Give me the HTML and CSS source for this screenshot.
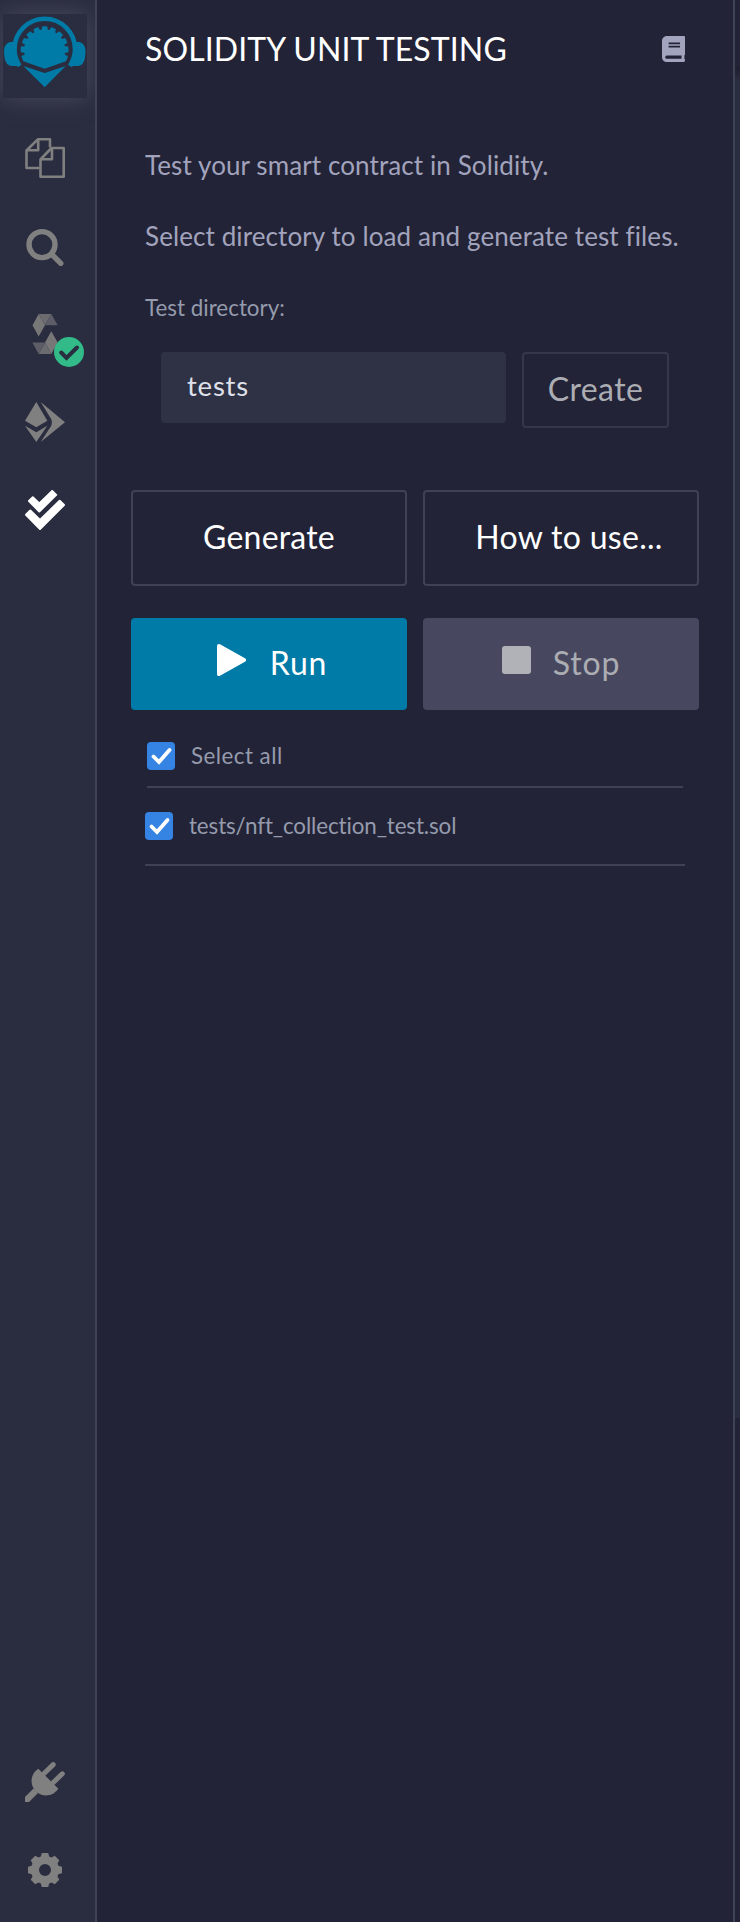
FILE: index.html
```
<!DOCTYPE html>
<html lang="en">
<head>
<meta charset="utf-8">
<title>Solidity Unit Testing</title>
<link rel="stylesheet" href="styles.css">
</head>
<body>
<div class="app">
  <nav class="rail">
    <div class="logo">
      <svg width="84" height="84" viewBox="0 0 84 84">
        <g fill="#007aa6">
          <path d="M11 28H7Q1 30 1 37Q1 52 9 52H17.500Q13 45 12.500 37L13 28ZM72.500 28H76.500Q82.500 30 82.500 37Q82.500 52 74.500 52H66Q70.500 45 71 37L70.500 28Z"/>
          <path d="M16.500 52Q11.300 43 11.500 35A30.200 30.200 0 0 1 72 35Q72.200 43 67 52" fill="none" stroke="#007aa6" stroke-width="4.600"/>
          <path d="M20.300 47.300A24 24 0 1 1 63 47.300L41.700 54.700Z"/>
          <path d="M20.300 52L41.700 59L62.700 52L41.700 73.300Z"/>
        </g>
        <g fill="#2a2c3f" transform="translate(41.700 36)">
          <path id="notch" d="M-2.400-25.500H2.400L.9-20.500H-.9Z" transform="rotate(-11)"/>
          <path d="M-2.400-25.500H2.400L.9-20.500H-.9Z" transform="rotate(11)"/>
          <path d="M-2.400-25.500H2.400L.9-20.500H-.9Z" transform="rotate(-33)"/>
          <path d="M-2.400-25.500H2.400L.9-20.500H-.9Z" transform="rotate(33)"/>
          <path d="M-2.400-25.500H2.400L.9-20.500H-.9Z" transform="rotate(-55)"/>
          <path d="M-2.400-25.500H2.400L.9-20.500H-.9Z" transform="rotate(55)"/>
          <path d="M-2.400-25.500H2.400L.9-20.500H-.9Z" transform="rotate(-77)"/>
          <path d="M-2.400-25.500H2.400L.9-20.500H-.9Z" transform="rotate(77)"/>
          <path d="M-2.400-25.500H2.400L.9-20.500H-.9Z" transform="rotate(-100)"/>
          <path d="M-2.400-25.500H2.400L.9-20.500H-.9Z" transform="rotate(100)"/>
        </g>
      </svg>
    </div>
    <div class="slot">
      <svg class="icon" viewBox="0 0 40 40" fill="none" stroke="#808080" stroke-width="2.600" stroke-linejoin="round">
        <path d="M14.500 30H1.500V12.500L12.800 1.300H25V9.500M13.200 1.300V12.300H1.500"/>
        <path d="M15.500 21.500L26.500 10H38.700V38.700H15.500ZM27 10V21.200H15.500"/>
      </svg>
    </div>
    <div class="slot">
      <svg class="icon" viewBox="0 0 40 40" fill="none" stroke="#808080" stroke-width="5.400" stroke-linecap="round">
        <circle cx="17" cy="18.600" r="13"/><path d="M27 28.500L35.800 37.300"/>
      </svg>
    </div>
    <div class="slot">
      <svg class="icon" viewBox="0 0 40 40">
        <path fill="#777" d="M7.500 11.300L13.700 0L20 11.300L13.700 22.500Z"/>
        <path fill="#6b6b70" d="M13.700 0H26.300L20 11.300Z"/>
        <path fill="#5c5d66" d="M26.300 0L32.700 11.300H20Z"/>
        <path fill="#777" d="M26.300 17.300L32.700 28.500L26.300 40L20 28.500Z"/>
        <path fill="#6b6b70" d="M13.700 40H26.300L20 28.500Z"/>
        <path fill="#5c5d66" d="M7.300 28.500H20L13.700 40Z"/>
      </svg>
      <svg class="badge" viewBox="0 0 30 30">
        <circle cx="15" cy="15" r="15" fill="#32ba89"/>
        <path d="M7.200 15.500L12.500 21L23 10.500" fill="none" stroke="#2a2c3f" stroke-width="4" stroke-linecap="round"/>
      </svg>
    </div>
    <div class="slot">
      <svg class="icon" viewBox="0 0 40 40" fill="#808080">
        <path d="M11.300 0L22.300 18.700L11.300 25.300L0 18.700ZM0 23.700L11.300 30.300L22.300 23.700L11.300 40ZM15.700 0L40 20.300L15.700 40L26.400 23.500Q27.600 20.300 26.300 17.300Z"/>
      </svg>
    </div>
    <div class="slot">
      <svg class="icon" viewBox="0 0 40 40" fill="#fff" stroke="#fff" stroke-width="2" stroke-linejoin="round">
        <path d="M4 11L7.800 7.200L14.300 13.500L27.200 1L31.200 4.900L14.300 21.500Z"/>
        <path d="M1 24.700L5.300 20.500L15 30L34.700 10.700L39 15L15 39Z"/>
      </svg>
    </div>
    <div class="slot bottom">
      <svg class="icon" viewBox="0 0 40 40" fill="#808080">
        <path d="M13.300 6.700L33.300 26.700A14.500 14.500 0 1 1 13.300 6.700Z"/>
        <path d="M19 11.500L28.200 2.600M28 20.800L37.300 11.800" fill="none" stroke="#808080" stroke-width="5" stroke-linecap="round"/>
        <path d="M0 35L8.500 26.500L13 31L4 40H0Z"/>
      </svg>
    </div>
    <div class="slot">
      <svg class="icon" viewBox="-20 -20 40 40" fill="#808080">
        <circle r="10" fill="none" stroke="#808080" stroke-width="8"/>
        <g id="teeth"><path id="tooth" d="M-4.600-12L-3.200-17H3.200L4.600-12V-10H-4.600Z"/>
        <use href="#tooth" transform="rotate(45)"/><use href="#tooth" transform="rotate(90)"/><use href="#tooth" transform="rotate(135)"/></g>
        <use href="#teeth" transform="rotate(180)"/>
      </svg>
    </div>
  </nav>
  <main class="panel">
    <header class="head">
      <h1 class="title">SOLIDITY UNIT TESTING</h1>
      <svg class="book" viewBox="0 0 448 512" preserveAspectRatio="none"><path fill="#a2a3bd" d="M448 360V24c0-13.300-10.700-24-24-24H96C43 0 0 43 0 96v320c0 53 43 96 96 96h328c13.300 0 24-10.700 24-24v-16c0-7.500-3.500-14.300-8.900-18.700-4.200-15.400-4.200-59.300 0-74.700 5.400-4.300 8.900-11.100 8.900-18.600zM128 134c0-3.300 2.700-6 6-6h212c3.300 0 6 2.700 6 6v20c0 3.300-2.700 6-6 6H134c-3.300 0-6-2.700-6-6v-20zm0 64c0-3.300 2.700-6 6-6h212c3.300 0 6 2.700 6 6v20c0 3.300-2.700 6-6 6H134c-3.300 0-6-2.700-6-6v-20zm253.400 250H96c-17.700 0-32-14.300-32-32 0-17.600 14.400-32 32-32h285.400c-1.900 17.100-1.900 46.900 0 64z"/></svg>
    </header>
    <section class="intro">
      <p>Test your smart contract in Solidity.</p>
      <p>Select directory to load and generate test files.</p>
      <p class="label">Test directory:</p>
    </section>
    <div class="directory">
      <div class="field">tests</div>
      <div class="create">Create</div>
    </div>
    <div class="actions">
      <button class="btn">Generate</button>
      <button class="btn how">How to use...</button>
      <button class="btn run">
        <svg width="29" height="32" viewBox="0 0 29 32"><path d="M2 2L27 16L2 30Z" fill="#fff" stroke="#fff" stroke-width="4" stroke-linejoin="round"/></svg>
        <span>Run</span>
      </button>
      <button class="btn stop">
        <svg width="29" height="28" viewBox="0 0 29 28"><rect width="29" height="28" rx="3" fill="#b1b2b8"/></svg>
        <span>Stop</span>
      </button>
    </div>
    <div class="check all">
      <svg class="box" viewBox="0 0 28 28"><rect width="28" height="28" rx="4" fill="#3584e4"/><path d="M6.500 14.500L12 20L22.500 8" fill="none" stroke="#fff" stroke-width="3.800" stroke-linecap="round"/></svg>
      <span>Select all</span>
    </div>
    <div class="check file">
      <svg class="box" viewBox="0 0 28 28"><rect width="28" height="28" rx="4" fill="#3584e4"/><path d="M6.500 14.500L12 20L22.500 8" fill="none" stroke="#fff" stroke-width="3.800" stroke-linecap="round"/></svg>
      <span>tests/nft_collection_test.sol</span>
    </div>
  </main>
  <aside class="edge"><div class="editor"></div></aside>
</div>
</body>
</html>
```
FILE: styles.css
```
* { box-sizing: border-box; }
body { margin: 0; background: #222336; font-family: Lato, sans-serif; }
.app { display: flex; width: 740px; height: 1922px; overflow: hidden; }
.rail {
  width: 97px; flex: none; padding: 14px 5px 8px 3px;
  display: flex; flex-direction: column;
  background: #2a2c3f; border-right: 2px solid #3f4455;
}
.logo { width: 84px; height: 84px; margin-bottom: 16px; flex: none; background: #2a2c3f; box-shadow: 0 0 22px #4a4b5e; clip-path: inset(-14px -8px -30px -3px); }
.logo svg { display: block; }
.slot { position: relative; width: 84px; height: 88px; flex: none; display: flex; align-items: center; justify-content: center; }
.bottom { margin-top: auto; }
.icon { width: 40px; height: 40px; display: block; overflow: hidden; }
.badge { position: absolute; left: 51px; top: 47px; width: 30px; height: 30px; }
.panel { width: 636px; flex: none; }
.edge { width: 7px; flex: none; border-left: 2px solid #3f4455; padding-top: 67px; }
.editor { height: 1351px; background: linear-gradient(#1d1e2d, #2a2c3f 14px); }
.head { height: 97px; padding: 0 48px; display: flex; justify-content: space-between; align-items: center; }
.title { margin: 0; font-size: 32px; line-height: 40px; font-weight: 400; letter-spacing: .09px; color: #fff; }
.book { width: 23px; height: 26px; }
.intro { padding: 48px 48px 0; color: #a2a3bd; font-size: 26px; letter-spacing: .1px; }
.intro p { margin: 0 0 31px; line-height: 40px; height: 40px; white-space: nowrap; }
.intro .label { font-size: 22.400px; letter-spacing: 0; color: #959bad; margin: 0; line-height: 42px; }
.directory { display: flex; align-items: flex-start; gap: 16px; padding: 25px 64px 0; }
.field { width: 345px; height: 71px; border-radius: 4px; background: #2f3145; padding: 0 26px; line-height: 68px; font-size: 27.500px; letter-spacing: .8px; color: #dfe1ea; }
.create { width: 147px; height: 76px; border: 2px solid #35374b; border-radius: 4px; color: #acadb3; font-size: 32px; line-height: 69px; letter-spacing: .4px; text-align: center; }
.actions { display: grid; grid-template-columns: 276px 276px; grid-template-rows: 96px 92px; gap: 32px 16px; padding: 62px 34px 0; }
.btn { font: 400 32px/40px Lato, sans-serif; letter-spacing: .2px; color: #fff; background: none; border: 2px solid #3f4254; border-radius: 4px; padding: 0 0 3px; display: flex; align-items: center; justify-content: center; white-space: nowrap; }
.how { padding-left: 16px; letter-spacing: .3px; }
.run, .stop { border: 0; gap: 24px; letter-spacing: .8px; }
.run { background: #007aa6; padding-left: 6px; }
.stop { background: #47485f; color: #acadb3; gap: 22px; }
.btn svg { flex: none; margin-top: -5px; }
.check { display: flex; gap: 16px; align-items: center; border-bottom: 2px solid #3f4254; color: #959bad; font-size: 22.400px; line-height: 28px; }
.box { width: 28px; height: 28px; flex: none; }
.all { margin: 32px 50px 0; padding-bottom: 16px; letter-spacing: .45px; }
.file { margin: 24px 48px 0; padding-bottom: 24px; letter-spacing: -.12px; }
```
